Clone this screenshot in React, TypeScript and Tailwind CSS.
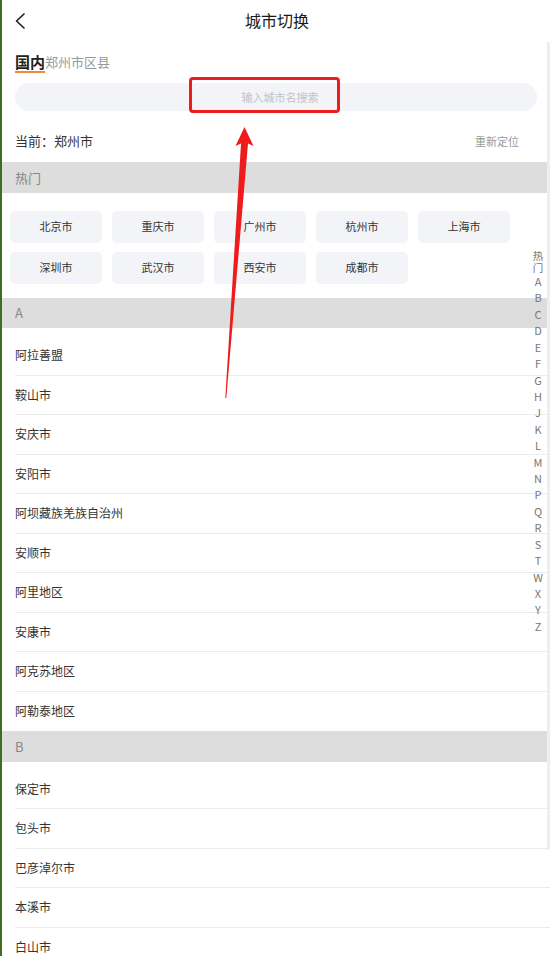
import React from 'react';

const hotCities = ['北京市', '重庆市', '广州市', '杭州市', '上海市', '深圳市', '武汉市', '西安市', '成都市'];

const groups = [
  {
    letter: 'A',
    cities: ['阿拉善盟', '鞍山市', '安庆市', '安阳市', '阿坝藏族羌族自治州', '安顺市', '阿里地区', '安康市', '阿克苏地区', '阿勒泰地区'],
  },
  {
    letter: 'B',
    cities: ['保定市', '包头市', '巴彦淖尔市', '本溪市', '白山市', '蚌埠市', '北海市'],
  },
];

const letters = ['A', 'B', 'C', 'D', 'E', 'F', 'G', 'H', 'J', 'K', 'L', 'M', 'N', 'P', 'Q', 'R', 'S', 'T', 'W', 'X', 'Y', 'Z'];

function SectionHeader({ label }: { label: string }) {
  return (
    <div className="h-[30.5px] bg-[#dddddd] flex items-center pl-[13px] text-[13px] text-[#888888]">
      {label}
    </div>
  );
}

export default function App() {
  return (
    <div className="relative w-[550px] h-[956px] overflow-hidden bg-white border-l-2 border-[#3f6d24] font-['Noto_Sans_CJK_SC','Noto_Sans',sans-serif] text-[#333333]">
      {/* nav bar */}
      <div className="h-[40px] flex items-center justify-center relative">
        <svg className="absolute left-[12px] top-[12px]" width="14" height="18" viewBox="0 0 14 18">
          <polyline points="10,2 2.5,9 10,16" fill="none" stroke="#222" strokeWidth="1.7" strokeLinecap="round" strokeLinejoin="round" />
        </svg>
        <span className="text-[16px] text-[#1a1a1a] mr-[-2px]">城市切换</span>
      </div>

      {/* tab */}
      <div className="pt-[13px] pl-[13px] flex items-end">
        <span className="text-[15px] font-bold leading-[18px] text-[#222222] border-b-2 border-[#f0883a]">国内</span>
        <span className="text-[13px] leading-[18px] text-[#999999] mb-[2px]">郑州市区县</span>
      </div>

      {/* search */}
      <div className="mt-[10px] ml-[13px] w-[522px] h-[28px] rounded-full bg-[#f3f4f7] flex items-center justify-center pl-[8px] text-[11px] text-[#c2c2c8]">
        输入城市名搜索
      </div>

      {/* current */}
      <div className="h-[51px] pt-[9px] px-[13px] pr-[31px] flex items-center justify-between">
        <span className="text-[13px] text-[#333333]">当前：郑州市</span>
        <span className="text-[11px] text-[#999999]">重新定位</span>
      </div>

      <SectionHeader label="热门" />
      <div className="pt-[18px] pb-[14px] pl-[8px]">
        <div className="grid grid-cols-5 w-[500px] gap-x-[10px] gap-y-[9px]">
          {hotCities.map((c) => (
            <div key={c} className="h-[32px] rounded-[5px] bg-[#f3f4f8] flex items-center justify-center text-[11px] text-[#333333]">
              {c}
            </div>
          ))}
        </div>
      </div>

      {groups.map((g) => (
        <div key={g.letter}>
          <SectionHeader label={g.letter} />
          <div className="pt-[8px]">
            {g.cities.map((c, i) => (
              <div
                key={c}
                className={
                  i === g.cities.length - 1
                    ? 'h-[39.5px] ml-[13px] flex items-center text-[12px] text-[#333333]'
                    : 'h-[39.5px] ml-[13px] flex items-center text-[12px] text-[#333333] border-b border-[#ebebeb]'
                }
              >
                {c}
              </div>
            ))}
          </div>
        </div>
      ))}

      {/* index bar */}
      <div className="absolute right-[6px] top-[250px] w-[12px] flex flex-col items-center text-[#777777]">
        <span className="text-[10.5px] leading-[11.5px]">热</span>
        <span className="text-[10.5px] leading-[11.5px]">门</span>
        {letters.map((l) => (
          <span key={l} className="text-[11px] leading-[16.42px]">
            {l}
          </span>
        ))}
      </div>

      {/* scrollbar track */}
      <div className="absolute right-0 top-[42px] w-[3px] h-[808px] bg-[#eeeeee]" />

      {/* annotation box */}
      <div className="absolute left-[187px] top-[77px] w-[151px] h-[36px] border-[3px] border-[#ee1c1c] rounded-[4px]" />

      {/* annotation arrow */}
      <svg className="absolute left-[-2px] top-0 pointer-events-none" width="550" height="956" viewBox="0 0 550 956">
        <polygon
          points="244.5,127 253.5,146 248,143.5 226.3,398 225.3,398 241,143.5 235.5,146"
          fill="#ee1c1c"
        />
      </svg>
    </div>
  );
}
